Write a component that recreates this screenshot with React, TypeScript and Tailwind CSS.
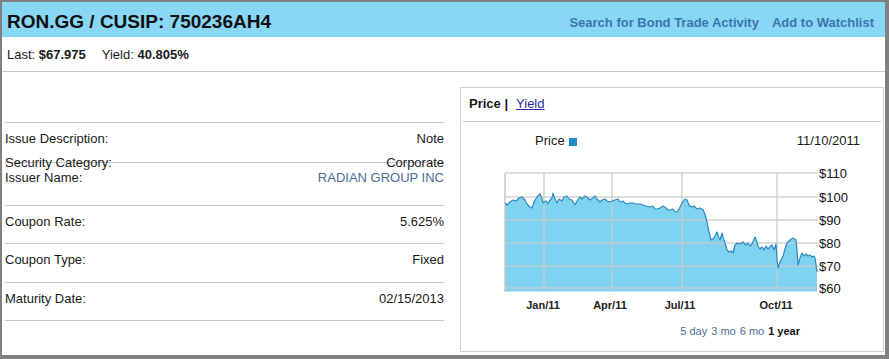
import React from "react";

const rows = [
  { label: "Coupon Rate:", value: "5.625%", h: "h-[38px]" },
  { label: "Coupon Type:", value: "Fixed", h: "h-[39px]" },
  { label: "Maturity Date:", value: "02/15/2013", h: "h-[38px]" },
];

// price series, drawn in page coordinates (the svg viewBox is offset to match)
const pts: [number, number][] = [
  [505, 203], [507, 205], [510, 202], [513, 200], [516, 201], [519, 198], [522, 197], [525, 200],
  [527, 204], [530, 207], [532, 208], [534, 202], [537, 197], [540, 194], [542, 199], [543, 203],
  [546, 201], [548, 204], [550, 200], [552, 198], [553, 193], [555, 199], [557, 203], [559, 199],
  [562, 201], [564, 197], [567, 196], [569, 199], [572, 200], [575, 205], [577, 201], [580, 197],
  [582, 199], [585, 196], [588, 198], [590, 200], [593, 198], [595, 196], [597, 199], [600, 202],
  [602, 200], [605, 199], [607, 201], [610, 202], [612, 201], [615, 200], [618, 199], [620, 202],
  [623, 201], [625, 203], [627, 204], [630, 203], [633, 203], [636, 204], [640, 204], [643, 205],
  [646, 206], [650, 207], [653, 206], [655, 209], [657, 209], [660, 208], [663, 206], [666, 208],
  [668, 210], [670, 210], [673, 209], [675, 212], [677, 212], [679, 209], [682, 203], [685, 199],
  [687, 200], [689, 205], [691, 207], [694, 206], [697, 209], [700, 208], [703, 210], [705, 214],
  [707, 222], [709, 232], [711, 240], [713, 239], [715, 236], [717, 232], [719, 238], [720, 240],
  [722, 233], [723, 237], [725, 243], [727, 250], [729, 252], [731, 251], [733, 253], [735, 245],
  [737, 243], [740, 244], [743, 242], [746, 245], [748, 243], [750, 246], [752, 244], [755, 237],
  [757, 242], [758, 246], [760, 249], [762, 247], [764, 250], [766, 246], [768, 249], [770, 247],
  [772, 245], [774, 250], [776, 244], [777, 260], [778, 268], [780, 262], [783, 256], [785, 249],
  [787, 243], [790, 240], [793, 238], [796, 240], [797, 250], [798, 265], [800, 258], [802, 253],
  [804, 256], [806, 254], [808, 256], [810, 255], [812, 257], [814, 256], [815, 258], [817, 272],
];

const yTicks = [
  { y: 173, t: "$110" },
  { y: 197, t: "$100" },
  { y: 220, t: "$90" },
  { y: 243, t: "$80" },
  { y: 266, t: "$70" },
  { y: 288, t: "$60" },
];

const xTicks = [
  { x: 544, lx: 543, t: "Jan/11" },
  { x: 612, lx: 610, t: "Apr/11" },
  { x: 682, lx: 680, t: "Jul/11" },
  { x: 777, lx: 776, t: "Oct/11" },
];

function PriceChart() {
  const line = pts.map((p, i) => `${i ? "L" : "M"}${p[0]} ${p[1]}`).join(" ");
  const area = `M505 291.5 ${pts.map((p) => `L${p[0]} ${p[1]}`).join(" ")} L817 291.5 Z`;
  return (
    <svg width="422" height="160" viewBox="461 155 422 160" className="block">
      <path d={area} fill="#7fd3f1" />
      {yTicks.map((t) => (
        <line key={t.t} x1="505" x2="818" y1={t.y} y2={t.y} stroke="#c9c9c9" strokeOpacity="0.85" strokeWidth="1.5" />
      ))}
      <line x1="505" x2="505" y1="173" y2="292" stroke="#c9c9c9" strokeWidth="1.5" />
      {xTicks.map((t) => (
        <line key={t.t} x1={t.x} x2={t.x} y1="173" y2="292" stroke="#c9c9c9" strokeOpacity="0.85" strokeWidth="1.5" />
      ))}
      <path d={line} fill="none" stroke="#2a8ac2" strokeWidth="1.2" strokeLinejoin="round" />
      {yTicks.map((t) => (
        <text key={t.t} x="819" y={t.y + 4.5} fontSize="13" fill="#111">
          {t.t}
        </text>
      ))}
      {xTicks.map((t) => (
        <text key={t.t} x={t.lx} y="309" fontSize="11" fontWeight="bold" fill="#222" textAnchor="middle">
          {t.t}
        </text>
      ))}
    </svg>
  );
}

export default function App() {
  return (
    <div className="h-[359px] w-[889px] overflow-hidden border-t-2 border-l-2 border-r-4 border-b-4 border-[#808080] bg-white font-['Liberation_Sans',Arial,sans-serif] text-[13px] leading-[15px] text-[#1a1a1a]">
      {/* header bar */}
      <div className="flex h-[35px] items-center justify-between bg-[#88d7f5] pt-[5px] pl-[5px] pr-[11px]">
        <h1 className="text-[19px] font-bold leading-[22px] text-[#111]">RON.GG / CUSIP: 750236AH4</h1>
        <div className="flex gap-[13px] text-[13px] font-bold text-[#3877ad]">
          <span>Search for Bond Trade Activity</span>
          <span>Add to Watchlist</span>
        </div>
      </div>

      {/* last / yield */}
      <div className="flex h-[35px] items-center gap-[16px] border-b border-[#c8c8c8] pl-[5px]">
        <span>
          Last: <b>$67.975</b>
        </span>
        <span>
          Yield: <b>40.805%</b>
        </span>
      </div>

      <div className="flex items-start">
        {/* left details column */}
        <div className="ml-[3px] w-[439px]">
          <div className="h-[51px] border-b border-[#c8c8c8]" />
          <div className="flex h-[40px] justify-between border-b border-[#c8c8c8] pt-[8px]">
            <span>Issue Description:</span>
            <span>Note</span>
          </div>
          <div className="flex h-[43px] flex-col border-b border-[#c8c8c8]">
            <div className="-mt-[8px] flex justify-between">
              <span>Security Category:</span>
              <span>Corporate</span>
            </div>
            <div className="flex justify-between">
              <span>Issuer Name:</span>
              <span className="text-[#4a6d94]">RADIAN GROUP INC</span>
            </div>
          </div>
          {rows.map((r) => (
            <div key={r.label} className={`flex justify-between border-b border-[#c8c8c8] pt-[8px] ${r.h}`}>
              <span>{r.label}</span>
              <span>{r.value}</span>
            </div>
          ))}
        </div>

        {/* chart panel */}
        <div className="mt-[15px] ml-[16px] flex h-[265px] w-[424px] flex-col border border-[#cfcfcf]">
          <div className="mx-[2px] h-[34px] border-b border-[#c8c8c8] pt-[8px] pl-[6px]">
            <b>Price |</b>
            <span className="ml-[8px] text-[#2b2b9e] underline">Yield</span>
          </div>
          <div className="flex h-[33px] items-start justify-between pt-[11px] pl-[74px] pr-[23px]">
            <span className="flex items-center gap-[4px]">
              Price <span className="mt-[2px] inline-block h-[8px] w-[8px] bg-[#1c8dc9]" />
            </span>
            <span>11/10/2011</span>
          </div>
          <PriceChart />
          <div className="flex justify-end gap-[4px] pt-[9px] pr-[83px] text-[11px] leading-[14px] text-[#4a6d94]">
            <span>5 day</span>
            <span>3 mo</span>
            <span>6 mo</span>
            <b className="text-[#111]">1 year</b>
          </div>
        </div>
      </div>
    </div>
  );
}
